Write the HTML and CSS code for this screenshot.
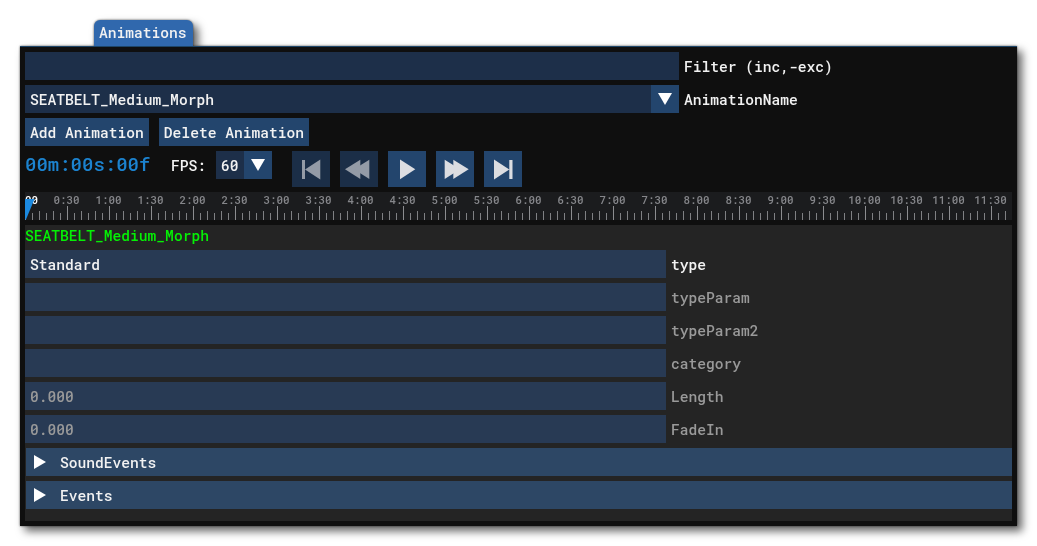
FILE: index.html
```html
<!DOCTYPE html>
<html lang="en">

<head>
    <meta charset="utf-8">
    <meta name="viewport" content="width=device-width, initial-scale=1.0">
    <title>Animations</title>
    <link rel="stylesheet" href="styles.css">
</head>

<body>
    <main class="panel">
        <div class="tab">Animations</div>

        <section class="window">
            <div class="row">
                <div class="field filter"></div>
                <span class="label">Filter (inc,-exc)</span>
            </div>
            <div class="row">
                <div class="field combo">
                    <span>SEATBELT_Medium_Morph</span>
                    <svg class="arrow" viewBox="0 0 28 28"><path d="M7 8H21L14 20Z" /></svg>
                </div>
                <span class="label">AnimationName</span>
            </div>
            <div class="row buttons">
                <button>Add Animation</button>
                <button>Delete Animation</button>
            </div>

            <!-- playback -->
            <div class="playback">
                <span class="time">00m:00s:00f</span>
                <span class="fps">FPS:</span>
                <div class="field combo fps-combo">
                    <span>60</span>
                    <svg class="arrow" viewBox="0 0 28 28"><path d="M7 8H21L14 20Z" /></svg>
                </div>
                <div class="controls">
                    <button class="control disabled"><svg viewBox="0 0 38 36"><path d="M10 9H13V28H10ZM13 18.5L28.3 8.5V28.5Z" /></svg></button>
                    <button class="control disabled"><svg viewBox="0 0 38 36"><path d="M5 18.3L20.3 8.7V28Z" /><path d="M14 18.3L29.3 8.7V28Z" /></svg></button>
                    <button class="control"><svg viewBox="0 0 38 36"><path d="M12 8.5L27.3 18.3L12 28.3Z" /></svg></button>
                    <button class="control"><svg viewBox="0 0 38 36"><path d="M8.7 8.7L24 18.3L8.7 28Z" /><path d="M17.3 8.7L32.7 18.3L17.3 28Z" /></svg></button>
                    <button class="control"><svg viewBox="0 0 38 36"><path d="M10 8.5L25.3 18.5L10 28.5ZM25.3 9H28.5V28H25.3Z" /></svg></button>
                </div>
            </div>

            <!-- timeline -->
            <div class="timeline">
                <div class="times">
                    <span class="now">00</span><span>0:30</span><span>1:00</span><span>1:30</span><span>2:00</span><span>2:30</span><span>3:00</span><span>3:30</span><span>4:00</span><span>4:30</span><span>5:00</span><span>5:30</span><span>6:00</span><span>6:30</span><span>7:00</span><span>7:30</span><span>8:00</span><span>8:30</span><span>9:00</span><span>9:30</span><span>10:00</span><span>10:30</span><span>11:00</span><span>11:30</span>
                </div>
                <div class="ticks"></div>
                <svg class="marker" viewBox="0 0 10 21"><path d="M0 0H9.5L1 20.5H0Z" /></svg>
            </div>

            <!-- properties -->
            <div class="properties">
                <h2 class="name">SEATBELT_Medium_Morph</h2>
                <div class="row">
                    <div class="field">Standard</div>
                    <span class="label">type</span>
                </div>
                <div class="row dim">
                    <div class="field"></div>
                    <span class="label">typeParam</span>
                </div>
                <div class="row dim">
                    <div class="field"></div>
                    <span class="label">typeParam2</span>
                </div>
                <div class="row dim">
                    <div class="field"></div>
                    <span class="label">category</span>
                </div>
                <div class="row dim">
                    <div class="field">0.000</div>
                    <span class="label">Length</span>
                </div>
                <div class="row dim">
                    <div class="field">0.000</div>
                    <span class="label">FadeIn</span>
                </div>
                <div class="group"><svg viewBox="0 0 12 14"><path d="M0 0L12 7L0 14Z" /></svg>SoundEvents</div>
                <div class="group"><svg viewBox="0 0 12 14"><path d="M0 0L12 7L0 14Z" /></svg>Events</div>
            </div>
        </section>
    </main>
</body>

</html>
```
FILE: styles.css
```css
* {
    box-sizing: border-box;
}

body {
    min-height: 546px;
    margin: 0;
    padding: 20px 20px 0;
    background-color: #fff;
    color: #f2f2f2;
    font-family: "Roboto Mono", "DejaVu Sans Mono", monospace;
    font-size: 14.6px;
    font-weight: 500;
    line-height: 29px;
}

svg {
    display: block;
    fill: #fff;
}

.panel {
    width: 997px;
    filter: drop-shadow(0 0 1px rgba(0, 0, 0, .6)) drop-shadow(5px 5px 4px rgba(0, 0, 0, .6));
}

.tab {
    width: 99px;
    height: 26px;
    margin-left: 74px;
    padding-left: 5px;
    border-radius: 6px 6px 0 0;
    background-color: #3068ad;
    line-height: 25px;
}

.window {
    display: flex;
    flex-direction: column;
    gap: 5px;
    height: 480px;
    padding: 5px;
    border-top: 1px solid #1d4568;
    background-color: #0f0f0f;
}

.row {
    display: flex;
    gap: 5px;
    height: 28px;
}

.field {
    width: 654px;
    height: 28px;
    padding-left: 5px;
    background-color: #1d2f49;
}

.combo {
    display: flex;
    justify-content: space-between;
}

.arrow {
    width: 28px;
    height: 28px;
    background-color: #23456d;
}

button {
    height: 28px;
    padding: 0 5px;
    border: 0;
    background-color: #23456d;
    color: inherit;
    font: inherit;
}

.buttons {
    gap: 10px;
}

.playback {
    display: flex;
    height: 36px;
}

.time {
    width: 146px;
    color: #1c83cf;
    font-size: 19px;
    line-height: 25px;
}

.fps {
    width: 45px;
}

.fps-combo {
    width: 56px;
}

.controls {
    display: flex;
    gap: 10px;
    margin-left: 20px;
}

.control {
    width: 38px;
    height: 36px;
    padding: 0;
}

.control svg {
    width: 38px;
    height: 36px;
    fill: #dcdde1;
}

.disabled {
    background-color: #1b2e47;
}

.disabled svg {
    fill: #949ba6;
}

.timeline {
    position: relative;
    height: 28px;
    overflow: hidden;
    background-color: #1b1c1e;
}

.times {
    display: flex;
    height: 14px;
    color: #85868a;
    font-size: 10.9px;
    line-height: 16px;
}

.times span {
    flex: 0 0 42px;
    text-align: center;
}

.times .now {
    flex-basis: 20.5px;
    color: #fff;
    text-align: left;
}

/* long tick every 42px, middle every 14px, short every 7px */
.ticks {
    height: 14px;
    background-image:
        repeating-linear-gradient(90deg, #8c8d90 0 1px, transparent 1px 42px),
        repeating-linear-gradient(90deg, #808184 0 1px, transparent 1px 14px),
        repeating-linear-gradient(90deg, #808184 0 1px, transparent 1px 7px);
    background-size: 100% 14px, 100% 9px, 100% 7px;
    background-position: 0 100%;
    background-repeat: no-repeat;
}

.marker {
    position: absolute;
    left: 0;
    top: 7px;
    width: 10px;
    height: 21px;
    fill: #1c8ae0;
}

.properties {
    display: flex;
    flex-direction: column;
    gap: 5px;
    height: 296px;
    background-color: #242424;
}

.name {
    height: 20px;
    margin: 0;
    color: #05f005;
    font-size: inherit;
    font-weight: inherit;
    line-height: 21px;
}

.properties .field {
    width: 641px;
    background-color: #283a54;
}

.dim {
    color: #999;
}

.group {
    display: flex;
    align-items: center;
    gap: 14px;
    height: 28px;
    margin-left: 1px;
    padding-left: 8px;
    background-color: #2d4765;
}

.group svg {
    width: 12px;
    height: 14px;
}
```
